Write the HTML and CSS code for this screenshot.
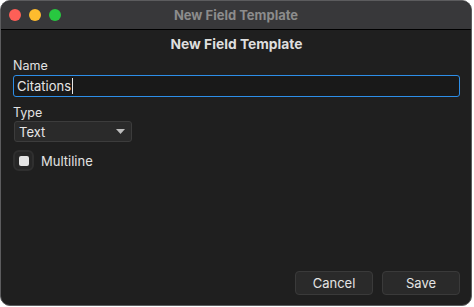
FILE: index.html
```html
<!DOCTYPE html>
<html>
<head>
<meta charset="utf-8">
<link rel="stylesheet" href="styles.css">
</head>
<body>
<div class="window">
  <div class="titlebar">
    <div class="lights">
      <span class="light red"></span>
      <span class="light yellow"></span>
      <span class="light green"></span>
    </div>
    <div class="title">New Field Template</div>
  </div>
  <div class="content">
    <div class="heading">New Field Template</div>
    <label class="label label-name">Name</label>
    <div class="input"><span>Citations</span><span class="caret"></span></div>
    <label class="label label-type">Type</label>
    <div class="select"><span>Text</span><svg class="arrow" width="9" height="5" viewBox="0 0 9 5"><path d="M0 0h9L4.5 5z" fill="#bdbdbd"/></svg></div>
    <div class="check-row">
      <span class="checkbox"><span class="check-inner"></span></span>
      <span class="check-label">Multiline</span>
    </div>
    <div class="spacer"></div>
    <div class="buttons">
      <button class="btn">Cancel</button>
      <button class="btn">Save</button>
    </div>
  </div>
</div>
</body>
</html>
```

FILE: styles.css
```css
html, body {
  margin: 0;
  padding: 0;
  background: #ffffff;
  font-family: "Inter", "Liberation Sans", sans-serif;
}
.window {
  width: 472px;
  height: 306px;
  box-sizing: border-box;
  border: 1px solid #5c5c5e;
  border-radius: 10px;
  overflow: hidden;
  background: #1f1f1f;
  display: flex;
  flex-direction: column;
}
.titlebar {
  height: 28px;
  background: #38383a;
  border-bottom: 1px solid #000;
  position: relative;
  display: flex;
  align-items: center;
  justify-content: center;
  flex: none;
}
.lights {
  position: absolute;
  left: 8px;
  top: 8px;
  display: flex;
  gap: 8px;
}
.light {
  width: 12px;
  height: 12px;
  border-radius: 50%;
  display: block;
}
.red { background: #fe5f57; }
.yellow { background: #febc2e; }
.green { background: #28c840; }
.title {
  color: #8c8c8c;
  font-size: 13px;
  font-weight: 700;
}
.content {
  flex: 1;
  display: flex;
  flex-direction: column;
  padding: 6px 11px 10px 12px;
}
.heading {
  text-align: center;
  color: #dedede;
  font-size: 13.8px;
  font-weight: 700;
  line-height: 16px;
}
.label {
  color: #e2e2e2;
  font-size: 12.5px;
  line-height: 16px;
}
.label-name { margin-top: 6px; }
.label-type { margin-top: 8px; }
.input {
  margin-top: 1px;
  height: 22px;
  box-sizing: border-box;
  border: 1px solid #2d8ee8;
  border-radius: 3px;
  background: #191919;
  display: flex;
  align-items: center;
  padding-left: 3px;
  color: #e6e6e6;
  font-size: 13px;
}
.caret {
  width: 1px;
  height: 16px;
  background: #e6e6e6;
  margin-left: 1px;
}
.select {
  margin-top: 0;
  margin-left: 1px;
  width: 118px;
  height: 21px;
  box-sizing: border-box;
  border: 1px solid #3c3c3c;
  border-radius: 3px;
  background: #2a2a2a;
  display: flex;
  align-items: center;
  justify-content: space-between;
  padding: 0 6px 0 4px;
  color: #e6e6e6;
  font-size: 13px;
}
.check-row {
  margin-top: 8px;
  display: flex;
  align-items: center;
  gap: 7px;
}
.checkbox {
  width: 21px;
  height: 21px;
  box-sizing: border-box;
  border: 2px solid #2f2f2f;
  border-radius: 6px;
  background: #262626;
  display: flex;
  align-items: center;
  justify-content: center;
}
.check-inner {
  width: 10px;
  height: 10px;
  border-radius: 2px;
  background: #e4e4e4;
}
.check-label {
  color: #e2e2e2;
  font-size: 13px;
}
.spacer { flex: 1; }
.buttons {
  display: flex;
  justify-content: flex-end;
  gap: 9px;
}
.btn {
  width: 78px;
  height: 24px;
  box-sizing: border-box;
  border: 1px solid #3a3a3a;
  border-radius: 4px;
  background: #2a2a2a;
  color: #e4e4e4;
  font-family: inherit;
  font-size: 13px;
  padding: 0;
}
```
